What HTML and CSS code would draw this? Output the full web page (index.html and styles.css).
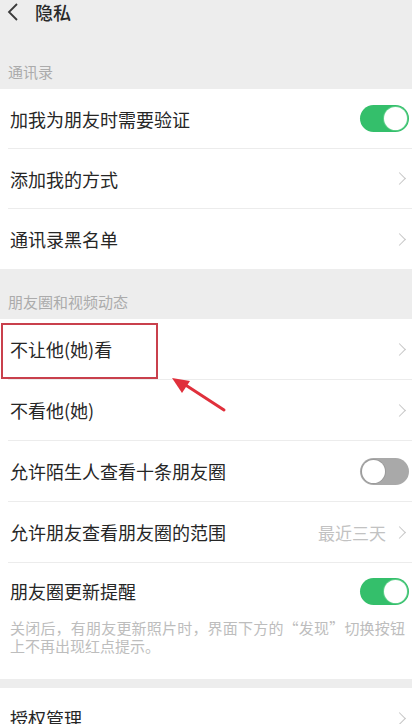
FILE: index.html
```html
<!DOCTYPE html>
<html lang="zh-CN">
<head>
<meta charset="utf-8">
<title>隐私</title>
<link rel="stylesheet" href="styles.css">
</head>
<body>
<div class="page">
  <header class="topbar">
    <svg class="back" width="12" height="20" viewBox="0 0 12 20"><polyline points="10,2 2,10 10,18" fill="none" stroke="#3a3a3a" stroke-width="1.8" stroke-linejoin="miter"/></svg>
    <span class="title">隐私</span>
  </header>

  <div class="section-label first">通讯录</div>
  <div class="group">
    <div class="row">
      <span class="label">加我为朋友时需要验证</span>
      <span class="switch on"><span class="knob"></span></span>
    </div>
    <div class="row">
      <span class="label">添加我的方式</span>
      <span class="chev"></span>
    </div>
    <div class="row">
      <span class="label">通讯录黑名单</span>
      <span class="chev"></span>
    </div>
  </div>

  <div class="section-label">朋友圈和视频动态</div>
  <div class="group tall">
    <div class="row">
      <span class="label">不让他(她)看</span>
      <span class="chev"></span>
      <span class="highlight"></span>
      <svg class="arrow" width="70" height="45" viewBox="0 0 70 45">
        <line x1="62" y1="40" x2="22" y2="14" stroke="#e0303c" stroke-width="3" stroke-linecap="round"/>
        <polygon points="10,8 28,11 20,23" fill="#e0303c"/>
      </svg>
    </div>
    <div class="row">
      <span class="label">不看他(她)</span>
      <span class="chev"></span>
    </div>
    <div class="row">
      <span class="label">允许陌生人查看十条朋友圈</span>
      <span class="switch off"><span class="knob"></span></span>
    </div>
    <div class="row">
      <span class="label">允许朋友查看朋友圈的范围</span>
      <span class="value">最近三天<span class="chev"></span></span>
    </div>
    <div class="row notice">
      <div class="notice-head">
        <span class="label">朋友圈更新提醒</span>
        <span class="switch on"><span class="knob"></span></span>
      </div>
      <p class="desc">关闭后，有朋友更新照片时，界面下方的“发现”切换按钮上不再出现红点提示。</p>
    </div>
  </div>

  <div class="spacer"></div>
  <div class="group">
    <div class="row">
      <span class="label">授权管理</span>
      <span class="chev"></span>
    </div>
  </div>
</div>
</body>
</html>
```

FILE: styles.css
```css
* { box-sizing: border-box; }
html, body {
  margin: 0;
  padding: 0;
  background: #ededed;
  overflow: hidden;
}
body {
  font-family: "Noto Sans CJK SC", "Noto Sans", sans-serif;
  color: #262626;
}
.page {
  width: 412px;
  height: 724px;
  overflow: hidden;
}
.topbar {
  height: 24px;
  display: flex;
  align-items: center;
  padding-left: 7px;
  gap: 16px;
}
.back { display: block; }
.title {
  font-size: 18px;
  line-height: 24px;
  font-weight: 500;
  color: #2a2a2a;
}
.section-label {
  font-size: 15px;
  line-height: 16px;
  color: #ababab;
  padding: 25px 9px 9px 8px;
}
.section-label.first {
  padding-top: 40px;
}
.group {
  background: #fff;
  padding-left: 8px;
}
.row {
  position: relative;
  height: 60px;
  display: flex;
  align-items: center;
  justify-content: space-between;
  padding: 0 3px 0 2px;
  border-bottom: 1px solid #ececec;
}
.group.tall .row { height: 61px; }
.row:last-child { border-bottom: none; }
.label {
  font-size: 18px;
  line-height: 24px;
  color: #262626;
}
.chev {
  display: inline-block;
  width: 9px;
  height: 9px;
  border-top: 1.6px solid #c6c6c6;
  border-right: 1.6px solid #c6c6c6;
  transform: rotate(45deg);
  margin-right: 5px;
  flex: none;
}
.value {
  display: flex;
  align-items: center;
  gap: 9px;
  font-size: 17px;
  color: #c2c2c2;
}
.switch {
  position: relative;
  width: 49px;
  height: 27px;
  border-radius: 14px;
  display: flex;
  align-items: center;
  padding: 2px;
}
.switch.on {
  background: #34bf6b;
  justify-content: flex-end;
}
.switch.off {
  background: #a9a9a9;
  justify-content: flex-start;
}
.knob {
  width: 23px;
  height: 23px;
  border-radius: 50%;
  background: #fff;
}
.switch.off .knob { box-shadow: 0 0 0 1px #9a9a9a; }
.switch.on .knob { box-shadow: 0 0 0 1px #5fcf8a; }
.highlight {
  position: absolute;
  left: -7px;
  top: 4px;
  width: 157px;
  height: 56px;
  border: 2px solid #c9404c;
}
.arrow {
  position: absolute;
  left: 154px;
  top: 51px;
  overflow: visible;
}
.group.tall .row.notice {
  height: auto;
  display: block;
  padding-bottom: 24px;
}
.notice-head {
  height: 56px;
  display: flex;
  align-items: center;
  justify-content: space-between;
}
.desc {
  margin: 0;
  padding-right: 4px;
  font-size: 15px;
  line-height: 18px;
  color: #bdbdbd;
  text-align: justify;
}
.spacer { height: 9px; }
```
